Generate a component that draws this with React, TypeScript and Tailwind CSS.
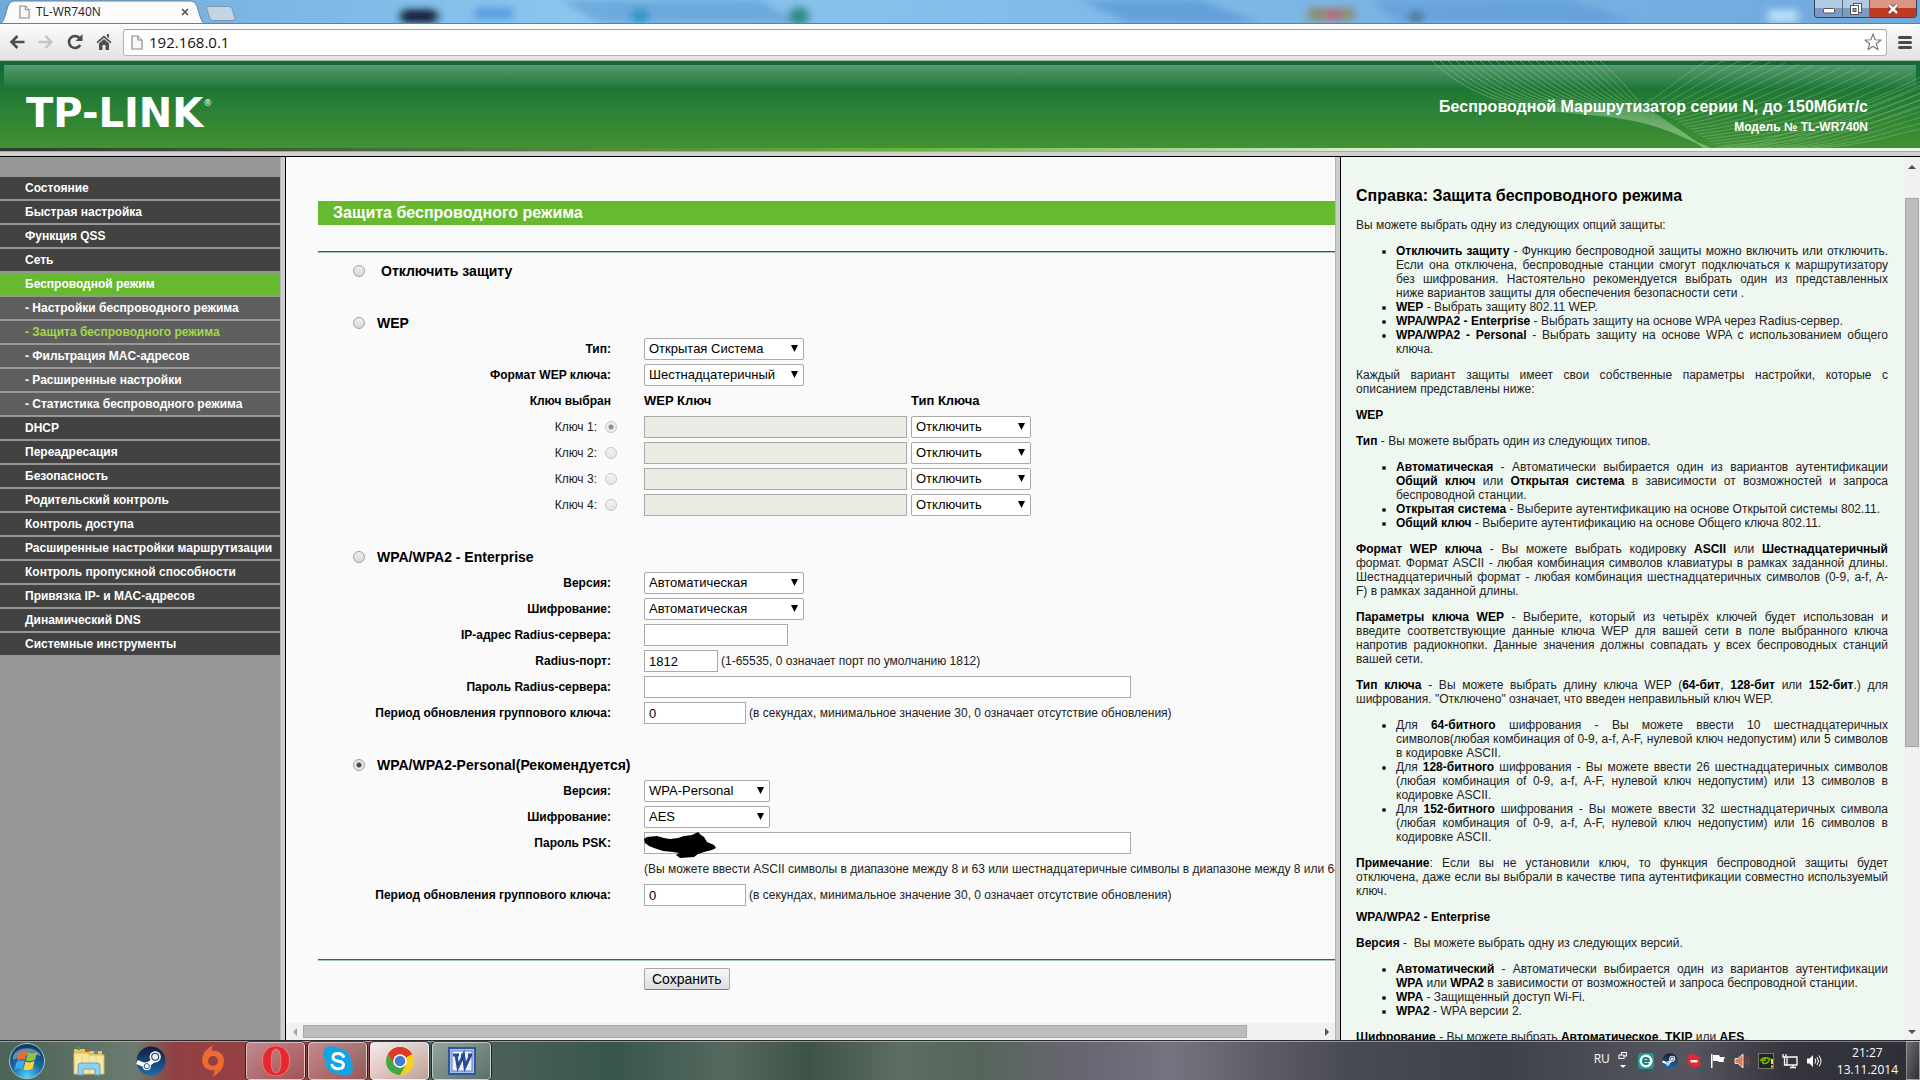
import React from "react";

const menu: { label: string; kind?: "sub" | "open" | "current" }[] = [
  { label: "Состояние" },
  { label: "Быстрая настройка" },
  { label: "Функция QSS" },
  { label: "Сеть" },
  { label: "Беспроводной режим", kind: "open" },
  { label: "- Настройки беспроводного режима", kind: "sub" },
  { label: "- Защита беспроводного режима", kind: "current" },
  { label: "- Фильтрация MAC-адресов", kind: "sub" },
  { label: "- Расширенные настройки", kind: "sub" },
  { label: "- Статистика беспроводного режима", kind: "sub" },
  { label: "DHCP" },
  { label: "Переадресация" },
  { label: "Безопасность" },
  { label: "Родительский контроль" },
  { label: "Контроль доступа" },
  { label: "Расширенные настройки маршрутизации" },
  { label: "Контроль пропускной способности" },
  { label: "Привязка IP- и MAC-адресов" },
  { label: "Динамический DNS" },
  { label: "Системные инструменты" },
];

const menuStyle = {
  plain: "bg-[#424242] text-white",
  sub: "bg-[#5f5f5f] text-white",
  open: "bg-[#67b930] text-white",
  current: "bg-[#5f5f5f] text-[#a4d84a]",
};

/* ---------- browser window ---------- */

function PageIcon({ className }: { className: string }) {
  return (
    <svg viewBox="0 0 12 15" className={className} fill="#f7f7f7" stroke="#8a8a8a" strokeWidth="1.2" aria-hidden="true">
      <path d="M1 1h6l4 4v9H1z" />
      <path d="M7 1v4h4" />
    </svg>
  );
}

function TabStrip() {
  return (
    <div className="relative flex h-6 shrink-0 items-start justify-between overflow-hidden border-b border-[#5f7fa3] bg-linear-to-r from-[#6ea9dc] via-[#8cc6ef] via-30% to-[#6fa8dc]">
      <svg className="absolute inset-0 h-full w-full" preserveAspectRatio="none" viewBox="0 0 1920 24" aria-hidden="true">
        <defs>
          <filter id="soft" x="-50%" y="-100%" width="200%" height="300%">
            <feGaussianBlur stdDeviation="4" />
          </filter>
        </defs>
        <g filter="url(#soft)">
          <path d="M560 0h200l40 24H600z" fill="#5f9fd6" opacity=".7" />
          <path d="M1080 0h120l60 24h-130z" fill="#4f91d0" opacity=".6" />
          <path d="M1370 0h200l70 24h-240z" fill="#5b9ad6" opacity=".6" />
          <rect x="400" y="10" width="38" height="14" rx="7" fill="#14243c" />
          <rect x="475" y="8" width="38" height="12" fill="#5a9fe0" />
          <circle cx="640" cy="17" r="9" fill="#3296c8" />
          <circle cx="799" cy="17" r="10" fill="#2f8c86" />
          <rect x="1308" y="8" width="46" height="14" fill="#8a8f72" />
          <rect x="1326" y="10" width="14" height="12" fill="#b36a84" />
          <rect x="1410" y="13" width="12" height="10" fill="#4c6788" />
          <rect x="1768" y="10" width="30" height="14" fill="#b6defa" />
        </g>
      </svg>
      <div className="relative flex items-start">
        <div className="relative flex h-6 w-[205px] items-center pl-[19px]">
          <svg className="absolute inset-0 h-full w-full" viewBox="0 0 205 24" aria-hidden="true">
            <path d="M0 24C4 22 5 16 8 6Q10 1 14 1H191Q195 1 197 6C200 16 201 22 205 24Z" fill="#fbfbfb" stroke="#6f8298" />
          </svg>
          <PageIcon className="relative h-[14px] w-[11px]" />
          <span className="relative ml-1.5 flex-1 font-['Open_Sans',sans-serif] text-xs text-[#222]">TL-WR740N</span>
          <button aria-label="Закрыть вкладку" className="relative mr-4">
            <svg viewBox="0 0 8 8" className="h-2 w-2" stroke="#555" strokeWidth="1.7"><path d="M1 1l6 6M7 1l-6 6" /></svg>
          </button>
        </div>
        <button aria-label="Новая вкладка" className="mt-1.5">
          <svg viewBox="0 0 32 15" className="h-[15px] w-8" aria-hidden="true">
            <path d="M1 .5H24q2 0 3 2l3 10q0 2-2 2H8q-2 0-3-2z" fill="#c3d4e3" stroke="#7f96ad" />
          </svg>
        </button>
      </div>
      <div className="relative mr-[3px] flex h-[18px] overflow-hidden rounded-b border border-t-0 border-[#33455c]">
        <button aria-label="Свернуть" className="flex w-7 items-center justify-center border-r border-[#4f6a87] bg-linear-to-b from-[#b3cbe2] from-50% to-[#7b9cc0] to-50%">
          <svg viewBox="0 0 12 6" className="mt-1 h-1.5 w-3"><rect x=".5" y=".5" width="11" height="4.5" rx="1" fill="#fff" stroke="#555" /></svg>
        </button>
        <button aria-label="Свернуть в окно" className="flex w-[27px] items-center justify-center border-r border-[#4f6a87] bg-linear-to-b from-[#b3cbe2] from-50% to-[#7b9cc0] to-50%">
          <svg viewBox="0 0 12 12" className="h-3 w-3" fill="#fff" stroke="#555"><rect x="3.500" y=".5" width="8" height="9" /><rect x=".5" y="2.500" width="8" height="9" /><rect x="3" y="5.500" width="3" height="3" fill="#8fa9c6" /></svg>
        </button>
        <button aria-label="Закрыть" className="flex w-[46px] items-center justify-center bg-linear-to-b from-[#dc9484] from-50% to-[#c03a22] to-50%">
          <svg viewBox="0 0 12 10" className="h-2.5 w-3"><path d="M2 1l8 8M10 1L2 9" stroke="#5a2a2a" strokeWidth="4" /><path d="M2 1l8 8M10 1L2 9" stroke="#fff" strokeWidth="2.500" /></svg>
        </button>
      </div>
    </div>
  );
}

function Toolbar() {
  return (
    <div className="flex h-[37px] shrink-0 items-center border-b border-[#a9b5ac] bg-linear-to-b from-[#fbfbfb] to-[#e3e3e3] pl-[9px] pr-2">
      <div className="flex w-[114px] items-center gap-[13px]">
        <button aria-label="Назад"><svg viewBox="0 0 16 16" className="h-4 w-4" fill="none" stroke="#4d4d4d" strokeWidth="2.600"><path d="M15.500 8H2.500M8.500 2L2.500 8l6 6" /></svg></button>
        <button aria-label="Вперёд"><svg viewBox="0 0 16 16" className="h-4 w-4" fill="none" stroke="#c4c4c4" strokeWidth="2.400"><path d="M.5 8h13M7.500 2l6 6-6 6" /></svg></button>
        <button aria-label="Обновить"><svg viewBox="0 0 16 16" className="h-4 w-4" fill="none" stroke="#4d4d4d" strokeWidth="2.600"><path d="M13.200 11A6 6 0 1 1 12.500 4" /><path d="M15.500 0v7h-7z" fill="#4d4d4d" stroke="none" /></svg></button>
        <button aria-label="Домой"><svg viewBox="0 0 16 16" className="h-4 w-4" fill="#505050"><path d="M8 1.500L15.500 8l-1 1.200L8 3.700 1.500 9.200.5 8z" /><path d="M8 5l5 4.200V16H9.500v-5h-3v5H3V9.200zM11 0h2v4l-2-1.500z" /></svg></button>
      </div>
      <div className="flex h-[27px] flex-1 items-center rounded-[3px] border border-[#b4b4b4] border-t-[#9d9d9d] bg-white pl-[7px] pr-1">
        <PageIcon className="h-[15px] w-3 shrink-0" />
        <input aria-label="Адресная строка" defaultValue="192.168.0.1" className="ml-1.5 min-w-0 flex-1 bg-transparent font-['Open_Sans',sans-serif] text-[15px] leading-5 text-[#111] outline-none" />
        <button aria-label="Добавить в закладки">
          <svg viewBox="0 0 18 18" className="h-[18px] w-[18px]" fill="#fff" stroke="#777" strokeWidth="1.100" strokeLinejoin="round"><path d="M9 1l2.100 5.800 6 .2-4.800 3.700L14 16.700 9 13.300l-5 3.400 1.700-6L.9 7l6-.2z" /></svg>
        </button>
      </div>
      <button aria-label="Меню" className="ml-[11px] flex w-[14px] flex-col gap-[2px]">
        <span className="h-[3px] rounded-sm bg-[#4a4a4a]" />
        <span className="h-[3px] rounded-sm bg-[#4a4a4a]" />
        <span className="h-[3px] rounded-sm bg-[#4a4a4a]" />
      </button>
    </div>
  );
}

/* ---------- router page ---------- */

function Waves() {
  const left = Array.from({ length: 22 }, (_, i) => i);
  const right = Array.from({ length: 20 }, (_, i) => i);
  return (
    <svg className="absolute right-0 top-0 h-full w-[490px]" viewBox="0 0 490 87" fill="none" stroke="#bfe3bd" strokeWidth=".8" aria-hidden="true">
      <g opacity=".45">
        {left.map((i) => (
          <path key={i} d={`M${2 + i * 8} 0C${52 + i * 7} ${46 - i} ${100 + i * 5} ${48 - i * 0.400} ${165 + i * 2.500} ${54 - i * 0.300}S${250 + i * 0.500} 76 ${280 - i * 0.300} 87`} />
        ))}
      </g>
      <g opacity=".35">
        {right.map((i) => (
          <path key={i} d={`M${216 + i * 4} ${42 + i * 2.400}C${238 + i * 8} ${30 + i * 2.600} ${258 + i * 11} ${8 + i * 2.800} ${285 + i * 14} ${-4 + i * 1.200}`} />
        ))}
        {right.slice(0, 9).map((i) => (
          <path key={i} d={`M${284 + i * 12} 87C${340 + i * 13} 84 ${400 + i * 7} ${58 + i * 2} 492 ${20 + i * 6}`} />
        ))}
      </g>
    </svg>
  );
}

function Banner() {
  return (
    <header className="shrink-0">
      <div className="relative flex h-[87px] items-center justify-between overflow-hidden bg-linear-to-b from-[#126638] via-[#1c7634] via-30% to-[#409233]">
        <div className="absolute inset-x-1 top-1 h-6 bg-linear-to-b from-[#559a70] to-[#1c7635]" />
        <Waves />
        <div className="relative flex items-start pl-[26px] pt-[17px] text-white">
          <span className="font-['DejaVu_Sans',sans-serif] text-[40px] font-bold leading-10">TP-LINK</span>
          <span className="pt-1 font-['DejaVu_Sans',sans-serif] text-[9px] leading-3">®</span>
        </div>
        <div className="relative pr-[52px] pt-5 text-right font-bold text-white">
          <div className="text-base leading-6">Беспроводной Маршрутизатор серии N, до 150Мбит/с</div>
          <div className="text-xs leading-4">Модель № TL-WR740N</div>
        </div>
      </div>
      <div className="h-[3px] bg-linear-to-r from-[#333733] via-[#6ab53a] via-48% to-[#eef5ea] to-75%" />
      <div className="h-1.5 border-b border-t border-b-black border-t-[#a9a9a9] bg-[#d0d0d0]" />
    </header>
  );
}

function Sidebar() {
  return (
    <nav className="w-[280px] shrink-0 bg-[#979797] pt-5">
      <ul className="flex flex-col gap-0.5">
        {menu.map((m) => (
          <li key={m.label}>
            <a href="#" className={`block h-[22px] whitespace-nowrap pl-[25px] text-xs font-bold leading-[22px] ${menuStyle[m.kind ?? "plain"]}`}>
              {m.label}
            </a>
          </li>
        ))}
      </ul>
    </nav>
  );
}

function FrameDivider() {
  return <div className="w-1.5 shrink-0 border-l border-r border-l-[#b5b5b5] border-r-black bg-[#cdcdcd]" />;
}

const radioClass =
  "m-0 h-3 w-3 shrink-0 appearance-none rounded-full border border-[#a0a0a0] bg-linear-to-b from-[#f0f0f0] to-[#d8d8d8] checked:bg-[radial-gradient(circle,#4a4a4a_0_2px,#e6e6e6_3px)] disabled:opacity-60";

function Select({ id, label, value, width }: { id: string; label?: string; value: string; width: string }) {
  return (
    <span className={`relative inline-block ${width}`}>
      <select id={id} aria-label={label} className="block h-[22px] w-full appearance-none rounded-xs border border-[#a9a9a9] bg-white pl-1 text-[13px] leading-5 text-black">
        <option>{value}</option>
      </select>
      <svg viewBox="0 0 7 7" className="pointer-events-none absolute right-1.5 top-[7px] h-[7px] w-[7px]" aria-hidden="true"><path d="M0 0h7L3.500 7z" /></svg>
    </span>
  );
}

function Input({ id, label, value, width, disabled }: { id: string; label?: string; value?: string; width: string; disabled?: boolean }) {
  return (
    <input
      id={id}
      aria-label={label}
      defaultValue={value}
      disabled={disabled}
      className={`h-[22px] border border-[#a9a9a9] bg-white px-1 text-[13px] leading-5 text-black disabled:bg-[#ebebe4] ${width}`}
    />
  );
}

function Row({ label, id, children }: { label?: string; id?: string; children?: React.ReactNode }) {
  return (
    <div className="flex h-[26px] items-center">
      <label htmlFor={id} className="w-[293px] shrink-0 whitespace-nowrap text-right text-xs font-bold text-black">{label}</label>
      <div className="ml-[33px] flex items-center gap-[3px] whitespace-nowrap">{children}</div>
    </div>
  );
}

function Mode({ id, label, checked, wide }: { id: string; label: string; checked?: boolean; wide?: boolean }) {
  return (
    <div className="flex h-[26px] items-center pl-[35px]">
      <input type="radio" name="mode" id={id} defaultChecked={checked} className={radioClass} />
      <label htmlFor={id} className={`text-sm font-bold text-black ${wide ? "ml-4" : "ml-3"}`}>{label}</label>
    </div>
  );
}

function Rule() {
  return <hr className="h-0.5 border-0 border-b border-[#a8c5b5] bg-[#2c6548]" />;
}

function Settings() {
  return (
    <main className="flex min-w-0 flex-1 flex-col bg-[#fafafa]">
      <div className="min-h-0 flex-1 overflow-hidden pl-8 pt-11">
        <h1 className="h-6 bg-[#67b930] pl-[15px] text-base font-bold leading-6 text-white">Защита беспроводного режима</h1>
        <div className="h-[26px]" />
        <Rule />
        <form className="mt-[5px] flex flex-col gap-[26px]" onSubmit={(e) => e.preventDefault()}>
          <Mode id="m-off" label="Отключить защиту" wide />
          <section>
            <Mode id="m-wep" label="WEP" />
            <Row label="Тип:" id="wep-type"><Select id="wep-type" value="Открытая Система" width="w-40" /></Row>
            <Row label="Формат WEP ключа:" id="wep-fmt"><Select id="wep-fmt" value="Шестнадцатеричный" width="w-40" /></Row>
            <Row label="Ключ выбран">
              <span className="w-[264px] text-[13px] font-bold text-black">WEP Ключ</span>
              <span className="text-[13px] font-bold text-black">Тип Ключа</span>
            </Row>
            {[1, 2, 3, 4].map((n) => (
              <div key={n} className="flex h-[26px] items-center">
                <div className="flex w-[299px] shrink-0 items-center justify-end gap-2 text-xs">
                  <label htmlFor={`key-${n}`}>Ключ {n}:</label>
                  <input type="radio" name="key" id={`key-${n}`} disabled defaultChecked={n === 1} className={radioClass} />
                </div>
                <div className="ml-[27px] flex items-center gap-1">
                  <Input id={`kv-${n}`} label={`WEP Ключ ${n}`} width="w-[263px]" disabled />
                  <Select id={`kt-${n}`} label={`Тип Ключа ${n}`} value="Отключить" width="w-[120px]" />
                </div>
              </div>
            ))}
          </section>
          <section>
            <Mode id="m-ent" label="WPA/WPA2 - Enterprise" />
            <Row label="Версия:" id="e-ver"><Select id="e-ver" value="Автоматическая" width="w-40" /></Row>
            <Row label="Шифрование:" id="e-enc"><Select id="e-enc" value="Автоматическая" width="w-40" /></Row>
            <Row label="IP-адрес Radius-сервера:" id="e-ip"><Input id="e-ip" width="w-36" /></Row>
            <Row label="Radius-порт:" id="e-port">
              <Input id="e-port" value="1812" width="w-[74px]" />
              <span className="text-xs">(1-65535, 0 означает порт по умолчанию 1812)</span>
            </Row>
            <Row label="Пароль Radius-сервера:" id="e-pw"><Input id="e-pw" width="w-[487px]" /></Row>
            <Row label="Период обновления группового ключа:" id="e-per">
              <Input id="e-per" value="0" width="w-[102px]" />
              <span className="text-xs">(в секундах, минимальное значение 30, 0 означает отсутствие обновления)</span>
            </Row>
          </section>
          <section>
            <Mode id="m-psk" label="WPA/WPA2-Personal(Рекомендуется)" checked />
            <Row label="Версия:" id="p-ver"><Select id="p-ver" value="WPA-Personal" width="w-[126px]" /></Row>
            <Row label="Шифрование:" id="p-enc"><Select id="p-enc" value="AES" width="w-[126px]" /></Row>
            <Row label="Пароль PSK:" id="p-psk">
              <span className="relative flex">
                <Input id="p-psk" width="w-[487px]" />
                <svg viewBox="0 0 72 26" className="absolute left-0 top-0 h-[26px] w-[72px]" aria-hidden="true">
                  <path d="M0 7l3-2 10-1 7 2 6 1 8-1 6-2 8-1 6-3 3 3 3 2 3 5 7 3 2 3-4 2-8 2-6 2-4 3-14 1-4-3 3-2-6-1-10-1-9-3-5-2-4-3z" />
                </svg>
              </span>
            </Row>
            <Row><span className="text-xs">(Вы можете ввести ASCII символы в диапазоне между 8 и 63 или шестнадцатеричные символы в диапазоне между 8 или 64.)</span></Row>
            <Row label="Период обновления группового ключа:" id="p-per">
              <Input id="p-per" value="0" width="w-[102px]" />
              <span className="text-xs">(в секундах, минимальное значение 30, 0 означает отсутствие обновления)</span>
            </Row>
          </section>
          <div className="mt-[25px]">
            <Rule />
            <button type="submit" className="ml-[326px] mt-[7px] h-[22px] rounded-xs border border-[#a9a9a9] border-b-[#7d7d7d] bg-linear-to-b from-[#f6f6f6] to-[#dddddd] px-[7px] text-sm leading-5 text-black">Сохранить</button>
          </div>
        </form>
      </div>
      <div className="flex h-[17px] shrink-0 items-center bg-[#f1f1f1]">
        <span className="flex w-[17px] justify-center"><svg viewBox="0 0 4 8" className="h-2 w-1" fill="#a3a3a3"><path d="M4 0v8L0 4z" /></svg></span>
        <div className="flex-1"><div className="h-[13px] w-[93%] border border-[#a8a8a8] bg-[#bcbcbc]" /></div>
        <span className="flex w-[17px] justify-center"><svg viewBox="0 0 4 8" className="h-2 w-1" fill="#505050"><path d="M0 0v8l4-4z" /></svg></span>
      </div>
    </main>
  );
}

function Help() {
  return (
    <aside className="flex w-[579px] shrink-0 overflow-hidden bg-[#eff7f1]">
      <div className="h-full min-w-0 flex-1 overflow-hidden pl-[15px] pr-4 pt-[29px] text-justify text-xs leading-[14px] text-[#222] [&_b]:text-black [&_li]:list-item [&_p]:my-3 [&_ul]:my-3 [&_ul]:list-disc [&_ul]:pl-10">
        <h2 className="text-left text-base font-bold leading-5 text-black">Справка: Защита беспроводного режима</h2>
        <p>Вы можете выбрать одну из следующих опций защиты:</p>
        <ul>
          <li><b>Отключить защиту</b> - Функцию беспроводной защиты можно включить или отключить. Если она отключена, беспроводные станции смогут подключаться к маршрутизатору без шифрования. Настоятельно рекомендуется выбрать один из представленных ниже&nbsp;вариантов защиты для обеспечения безопасности сети .</li>
          <li><b>WEP</b> - Выбрать защиту 802.11 WEP.</li>
          <li><b>WPA/WPA2 - Enterprise</b> - Выбрать защиту на основе WPA через Radius-сервер.</li>
          <li><b>WPA/WPA2 - Personal</b> - Выбрать защиту на основе WPA с использованием общего ключа.</li>
        </ul>
        <p>Каждый вариант защиты имеет свои собственные параметры настройки, которые с описанием&nbsp;представлены ниже:</p>
        <p><b>WEP</b></p>
        <p><b>Тип</b> - Вы можете выбрать один из следующих типов.</p>
        <ul>
          <li><b>Автоматическая</b> - Автоматически выбирается один из вариантов аутентификации <b>Общий ключ</b> или <b>Открытая система</b> в зависимости от возможностей и запроса беспроводной станции.</li>
          <li><b>Открытая система</b> - Выберите аутентификацию на основе Открытой системы 802.11.</li>
          <li><b>Общий ключ</b> - Выберите аутентификацию на основе Общего ключа 802.11.</li>
        </ul>
        <p><b>Формат WEP ключа</b> - Вы можете выбрать кодировку <b>ASCII</b> или <b>Шестнадцатеричный</b> формат. Формат ASCII - любая комбинация символов клавиатуры в рамках заданной длины. Шестнадцатеричный формат - любая комбинация шестнадцатеричных символов (0-9, a-f, A-F)&nbsp;в&nbsp;рамках заданной длины.</p>
        <p><b>Параметры ключа WEP</b> - Выберите, который из четырёх ключей будет использован и введите соответствующие данные ключа WEP для вашей сети в поле выбранного ключа напротив радиокнопки. Данные значения должны совпадать у всех беспроводных станций вашей сети.</p>
        <p><b>Тип ключа</b> - Вы можете выбрать длину ключа WEP (<b>64-бит</b>, <b>128-бит</b> или <b>152-бит</b>.) для шифрования. "Отключено" означает, что введен неправильный ключ WEP.</p>
        <ul>
          <li>Для <b>64-битного</b> шифрования - Вы можете ввести 10 шестнадцатеричных символов(любая комбинация of 0-9, a-f, A-F, нулевой ключ недопустим) или 5 символов в кодировке ASCII.</li>
          <li>Для <b>128-битного</b> шифрования - Вы можете ввести 26 шестнадцатеричных символов (любая комбинация of 0-9, a-f, A-F, нулевой ключ недопустим) или 13 символов в кодировке ASCII.</li>
          <li>Для <b>152-битного</b> шифрования - Вы можете ввести 32 шестнадцатеричных символа (любая комбинация of 0-9, a-f, A-F, нулевой ключ недопустим) или 16 символов в кодировке ASCII.</li>
        </ul>
        <p><b>Примечание</b>: Если вы не установили ключ, то функция беспроводной защиты будет отключена, даже если вы выбрали в качестве типа аутентификации совместно используемый ключ.</p>
        <p><b>WPA/WPA2 - Enterprise</b></p>
        <p><b>Версия</b> -&nbsp; Вы можете выбрать одну из следующих версий.</p>
        <ul>
          <li><b>Автоматический</b> - Автоматически выбирается один из вариантов аутентификации <b>WPA</b> или <b>WPA2</b> в зависимости от возможностей и запроса беспроводной станции.</li>
          <li><b>WPA</b> - Защищенный доступ Wi-Fi.</li>
          <li><b>WPA2</b> - WPA версии 2.</li>
        </ul>
        <p><b>Шифрование</b> - Вы можете выбрать <b>Автоматическое</b>, <b>TKIP</b> или <b>AES</b>.</p>
      </div>
      <div className="flex w-4 shrink-0 flex-col items-center bg-[#f1f1f1] py-1.5">
        <svg viewBox="0 0 8 4" className="mt-0.5 h-1 w-2" fill="#505050"><path d="M0 4h8L4 0z" /></svg>
        <div className="mt-[29px] w-full flex-1 px-px"><div className="h-[66%] w-full border border-[#a8a8a8] bg-[#bcbcbc]" /></div>
        <svg viewBox="0 0 8 4" className="h-1 w-2" fill="#505050"><path d="M0 0h8L4 4z" /></svg>
      </div>
    </aside>
  );
}

/* ---------- desktop taskbar ---------- */

function SteamIcon({ className }: { className: string }) {
  return (
    <svg viewBox="0 0 32 32" className={className} aria-hidden="true">
      <defs><linearGradient id="stm" x1="0" y1="0" x2="0" y2="1"><stop offset="0" stopColor="#141b3a" /><stop offset="1" stopColor="#1f6aa8" /></linearGradient></defs>
      <circle cx="16" cy="16" r="15.500" fill="url(#stm)" />
      <path d="M1 17l10 4 7-5 4-6" stroke="#fff" strokeWidth="4.500" fill="none" strokeLinejoin="round" />
      <circle cx="20.500" cy="11.500" r="6" fill="#fff" /><circle cx="20.500" cy="11.500" r="4.300" fill="#1b3560" /><circle cx="20.500" cy="11.500" r="3.200" fill="#e9eef5" />
      <circle cx="11.500" cy="21.500" r="4.300" fill="#fff" /><circle cx="11.500" cy="21.500" r="2.800" fill="none" stroke="#1b4b80" />
    </svg>
  );
}

function TaskButton({ label, bright, children }: { label: string; bright?: boolean; children: React.ReactNode }) {
  return (
    <button aria-label={label} className={`flex h-[38px] w-[59px] items-center justify-center rounded-sm border border-white/60 outline-1 outline-black/60 ${bright ? "bg-linear-to-br from-white/90 to-[#f3b7ad]/70" : "bg-linear-to-br from-white/40 to-white/10"}`}>
      {children}
    </button>
  );
}

function Taskbar() {
  return (
    <footer className="relative flex h-10 shrink-0 items-center justify-between overflow-hidden border-t border-[#2b2b2f] bg-[linear-gradient(90deg,#4c6358_0%,#5c6f62_4%,#6b7d70_7%,#8f4142_9%,#9b3f42_16%,#8a4646_19%,#4d6a60_21%,#4a5f58_26%,#39564b_32%,#56695f_38%,#3e5348_42%,#5d6d63_47%,#56655c_51%,#6b6674_57%,#77727f_61%,#62606b_65%,#494b53_70%,#3f4149_78%,#55565f_88%,#35363d_93%,#2e2f36_100%)]">
      <div className="absolute inset-x-0 top-0 h-px bg-white/40" />
      <div className="relative flex items-center">
        <button aria-label="Пуск" className="ml-2">
          <svg viewBox="0 0 38 38" className="h-[38px] w-[38px]">
            <defs>
              <radialGradient id="orb" cx=".5" cy=".95" r=".9"><stop offset="0" stopColor="#4fd6ff" /><stop offset=".5" stopColor="#1b6aa5" /><stop offset="1" stopColor="#123a62" /></radialGradient>
            </defs>
            <circle cx="19" cy="19" r="17.500" fill="url(#orb)" stroke="#9fc3dc" />
            <path d="M5 14a15 12 0 0 1 28 0q-14-4-28 4z" fill="#fff" opacity=".35" />
            <path d="M11 11q4-3 8-1l-2 8q-4-2-8 1z" fill="#ef6a2d" />
            <path d="M20 10.500q4 2 9-.5l-2 8q-5 2-9 .5z" fill="#8dc63f" />
            <path d="M8.500 20q4-3 8-1l-2 8q-4-2-8 1z" fill="#3fa9f5" />
            <path d="M17.500 19.500q4 2 9-.5l-2 8q-5 2-9 .5z" fill="#ffd23f" />
          </svg>
        </button>
        <button aria-label="Проводник" className="ml-[27px]">
          <svg viewBox="0 0 32 30" className="h-[30px] w-8">
            <path d="M1 3h11l2 2h15v6H1z" fill="#e7c25c" /><rect x="4" y="1" width="3" height="3" fill="#2fa84f" /><rect x="12" y="3" width="4" height="3" fill="#cf4b3a" /><rect x="21" y="5" width="4" height="3" fill="#3f8fd0" />
            <path d="M1 7h13l2 2h15v19H1z" fill="#f8e7a2" stroke="#d9b85a" /><path d="M9 9v18M16 10v17M23 10v17" stroke="#ecd27c" />
            <path d="M5 29V20q0-3 3-3h16q3 0 3 3v9h-5v-6H10v6z" fill="#8fd0ee" stroke="#5aa6d0" />
          </svg>
        </button>
        <button aria-label="Steam" className="ml-[31px]"><SteamIcon className="h-[30px] w-[30px]" /></button>
        <button aria-label="Origin" className="ml-[34px]">
          <svg viewBox="0 0 26 34" className="h-[34px] w-[26px]"><path fillRule="evenodd" d="M14 1q-3 3-2 6a10 10 0 0 1 12 10q0 10-12 16 3-4 2-7A10 10 0 0 1 2 17Q2 6 14 1zM13 12a5 5 0 1 0 0 10 5 5 0 0 0 0-10z" fill="#ee6a33" /></svg>
        </button>
        <div className="ml-5 flex gap-[3px]">
          <TaskButton label="Opera"><svg viewBox="0 0 28 30" className="h-[30px] w-7"><path fillRule="evenodd" d="M14 0c8 0 13.500 6 13.500 15S22 30 14 30 .5 24 .5 15 6 0 14 0zm0 3c-3.500 0-4.800 5-4.800 12S10.500 27 14 27s4.800-5 4.800-12S17.500 3 14 3z" fill="#e8262f" stroke="#ff8f8f" strokeWidth=".7" /></svg></TaskButton>
          <TaskButton label="Skype">
            <svg viewBox="0 0 30 30" className="h-[30px] w-[30px]"><circle cx="15" cy="15" r="13" fill="#12a5e6" /><circle cx="8" cy="8" r="8" fill="#12a5e6" /><circle cx="22" cy="22" r="8" fill="#12a5e6" /><path d="M20.500 10.500Q19 7.500 15 7.500q-5 0-5 3.700 0 3 5 3.800 5.500.9 5.500 4 0 3.700-5.500 3.700-4.500 0-6-3.500" fill="none" stroke="#fff" strokeWidth="3" strokeLinecap="round" /></svg>
          </TaskButton>
          <TaskButton label="Chrome" bright>
            <svg viewBox="0 0 30 30" className="h-[30px] w-[30px]"><circle cx="15" cy="15" r="14" fill="#f9cf1f" /><path d="M15 15L2.900 8A14 14 0 0 1 27.100 8z" fill="#db3a2c" /><path d="M15 8h12.100A14 14 0 0 0 2.900 8l6 10.500z" fill="#db3a2c" /><path d="M2.900 8A14 14 0 0 0 15 29l6-10.500L15 22 9 18.500z" fill="#3fa74a" /><circle cx="15" cy="15" r="6.800" fill="#fff" /><circle cx="15" cy="15" r="5.300" fill="#3f7fd0" /></svg>
          </TaskButton>
          <TaskButton label="Word">
            <svg viewBox="0 0 28 28" className="h-7 w-7"><rect x="1" y="1" width="26" height="26" fill="#a9c0e6" stroke="#2f55a0" strokeWidth="2" /><rect x="4" y="4" width="20" height="20" fill="#eef3fb" stroke="#5f80bf" /><path d="M5 8h6M13 8h4M20 8h4M8 8l2 12L15.500 8l1.500 12L22.500 8" fill="none" stroke="#274b97" strokeWidth="3" /></svg>
          </TaskButton>
        </div>
      </div>
      <div className="relative flex h-full items-center text-white">
        <span className="mb-1 mr-2 font-['Open_Sans',sans-serif] text-xs">RU</span>
        <svg viewBox="0 0 10 18" className="mr-2.5 h-[18px] w-2.5" fill="none" stroke="#fff"><rect x="3.500" y=".5" width="5" height="3.500" /><rect x="1" y="3" width="5" height="3.500" fill="#555" /><path d="M2 13h6l-3 3z" fill="#fff" stroke="none" /></svg>
        <div className="flex items-center gap-2">
          <svg viewBox="0 0 16 16" className="h-4 w-4"><rect width="16" height="16" rx="4" fill="#1c9c98" /><circle cx="8" cy="8" r="6.500" fill="#fff" /><path d="M5 8h6q0-3-3-3T5 8t3 3q1.500 0 2.500-1" fill="none" stroke="#177c78" strokeWidth="1.800" /></svg>
          <SteamIcon className="h-4 w-4" />
          <svg viewBox="0 0 16 16" className="h-4 w-4"><path d="M2 3q4-4 7-1 6 0 5 6 2 6-3 6-4 2-6-1Q0 12 2 8z" fill="#e02a33" /><rect x="4.500" y="7" width="7" height="2.400" fill="#fff" /></svg>
          <svg viewBox="0 0 16 16" className="h-4 w-4" fill="#fff"><path d="M1 1h1.500v14H1zM3 2h6l1 2h5l-1.500 3L14 9H9L8 8H3z" /></svg>
          <svg viewBox="0 0 16 16" className="h-4 w-4"><path d="M1 5.500h3L9 1v14l-5-4.500H1z" fill="#e07b55" stroke="#fff" strokeWidth=".8" /><path d="M11 5q2 3 0 6M13.500 3q3 5 0 10" fill="none" stroke="#a5452c" /></svg>
          <svg viewBox="0 0 16 16" className="h-4 w-4"><rect x=".5" y=".5" width="15" height="15" fill="#20251d" stroke="#777" /><path d="M2 8q4-5 10-2-3 6-7 4-2-3 3-3" fill="none" stroke="#76b900" strokeWidth="1.600" /><path d="M13 6h2v5h-2zM13 12.500h2v2h-2z" fill="#ffd23f" /></svg>
          <svg viewBox="0 0 16 16" className="h-4 w-4" fill="none" stroke="#fff" strokeWidth="1.300"><path d="M5 4h10v8H5zM8 14.500h6M11 12v2" /><path d="M1 1v3h3V1M2.500 4v8H5" /></svg>
          <svg viewBox="0 0 16 16" className="h-4 w-4"><path d="M1 5.500h2.500L7 2v12l-3.500-3.500H1z" fill="#fff" /><path d="M9 5.500q1.500 2.500 0 5M11 4q3 4 0 8M13 2.500q4 5.500 0 11" fill="none" stroke="#fff" /></svg>
        </div>
        <div className="ml-[15px] mr-2 text-center font-['Open_Sans',sans-serif] text-xs leading-[17px]">
          <div>21:27</div>
          <div>13.11.2014</div>
        </div>
        <button aria-label="Показать рабочий стол" className="h-full w-3.5 border border-white/40 bg-linear-to-br from-white/30 to-transparent" />
      </div>
    </footer>
  );
}

export default function App() {
  return (
    <div className="flex h-screen flex-col overflow-hidden bg-white font-['Liberation_Sans',Arial,sans-serif] text-[#222]">
      <TabStrip />
      <Toolbar />
      <Banner />
      <div className="flex min-h-0 flex-1">
        <Sidebar />
        <FrameDivider />
        <Settings />
        <FrameDivider />
        <Help />
      </div>
      <Taskbar />
    </div>
  );
}
